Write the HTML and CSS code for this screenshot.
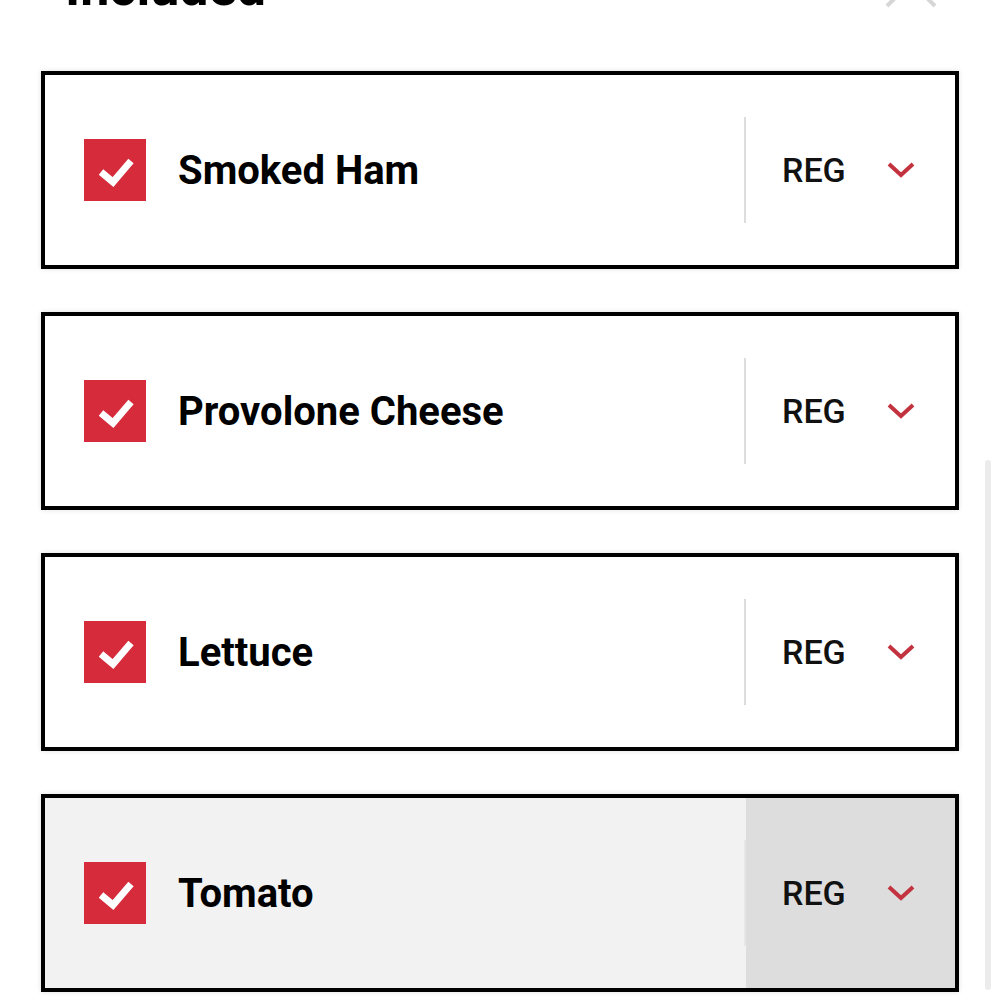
FILE: index.html
```html
<!DOCTYPE html>
<html lang="en">
<head>
    <meta charset="UTF-8">
    <meta name="viewport" content="width=device-width, initial-scale=1.0">
    <title>Included</title>
    <link rel="stylesheet" href="styles.css">
</head>
<body>
    <div class="page">
        <div class="section-head">
            <span class="section-title">Included</span>
            <svg class="collapse" width="56" height="40" viewBox="0 0 56 40">
                <polyline points="4,36 28,12 52,36" fill="none" stroke="#d6d6d6" stroke-width="4"/>
            </svg>
        </div>

        <div class="items">
            <div class="item">
                <div class="item-main">
                    <span class="check">
                        <svg width="62" height="62" viewBox="0 0 62 62"><polyline points="17,33 29,43 47,22" fill="none" stroke="#fff" stroke-width="7"/></svg>
                    </span>
                    <span class="item-name">Smoked Ham</span>
                </div>
                <div class="divider"></div>
                <div class="item-size">
                    <span class="size-label">REG</span>
                    <svg class="chevron" width="28" height="18" viewBox="0 0 28 18"><polyline points="2,3 14,14 26,3" fill="none" stroke="#c3333f" stroke-width="4"/></svg>
                </div>
            </div>

            <div class="item">
                <div class="item-main">
                    <span class="check">
                        <svg width="62" height="62" viewBox="0 0 62 62"><polyline points="17,33 29,43 47,22" fill="none" stroke="#fff" stroke-width="7"/></svg>
                    </span>
                    <span class="item-name">Provolone Cheese</span>
                </div>
                <div class="divider"></div>
                <div class="item-size">
                    <span class="size-label">REG</span>
                    <svg class="chevron" width="28" height="18" viewBox="0 0 28 18"><polyline points="2,3 14,14 26,3" fill="none" stroke="#c3333f" stroke-width="4"/></svg>
                </div>
            </div>

            <div class="item">
                <div class="item-main">
                    <span class="check">
                        <svg width="62" height="62" viewBox="0 0 62 62"><polyline points="17,33 29,43 47,22" fill="none" stroke="#fff" stroke-width="7"/></svg>
                    </span>
                    <span class="item-name">Lettuce</span>
                </div>
                <div class="divider"></div>
                <div class="item-size">
                    <span class="size-label">REG</span>
                    <svg class="chevron" width="28" height="18" viewBox="0 0 28 18"><polyline points="2,3 14,14 26,3" fill="none" stroke="#c3333f" stroke-width="4"/></svg>
                </div>
            </div>

            <div class="item pressed">
                <div class="item-main">
                    <span class="check">
                        <svg width="62" height="62" viewBox="0 0 62 62"><polyline points="17,33 29,43 47,22" fill="none" stroke="#fff" stroke-width="7"/></svg>
                    </span>
                    <span class="item-name">Tomato</span>
                </div>
                <div class="divider"></div>
                <div class="item-size">
                    <span class="size-label">REG</span>
                    <svg class="chevron" width="28" height="18" viewBox="0 0 28 18"><polyline points="2,3 14,14 26,3" fill="none" stroke="#c3333f" stroke-width="4"/></svg>
                </div>
            </div>
        </div>

        <div class="scrollbar"></div>
    </div>
</body>
</html>
```

FILE: styles.css
```css
body {
    margin: 0;
    background-color: #ffffff;
    font-family: Roboto, "Liberation Sans", sans-serif;
    overflow: hidden;
}
.page {
    display: flow-root;
    position: relative;
    height: 1000px;
    padding: 0 41px;
}
.section-head {
    display: flex;
    justify-content: space-between;
    align-items: flex-end;
    height: 52px;
    margin-top: -38px;
    padding: 0 24px;
}
.section-title {
    font-size: 52px;
    line-height: 52px;
    font-weight: bold;
    color: #000000;
}
.collapse {
    margin-bottom: 4px;
    margin-right: -4px;
}
.items {
    display: flex;
    flex-direction: column;
    gap: 43px;
    padding-top: 57px;
}
.item {
    display: flex;
    align-items: center;
    height: 198px;
    box-sizing: border-box;
    border: 4px solid #000000;
    background-color: #ffffff;
    box-shadow: 0 0 5px rgba(0, 0, 0, 0.12);
}
.item-main {
    flex: 1;
    display: flex;
    align-items: center;
    gap: 32px;
    padding-left: 39px;
}
.check {
    width: 62px;
    height: 62px;
    flex: none;
    display: flex;
    background-color: #d52b3b;
}
.item-name {
    font-size: 40px;
    font-weight: bold;
    color: #000000;
}
.divider {
    width: 2px;
    height: 106px;
    background-color: #dddddd;
}
.item-size {
    width: 209px;
    height: 100%;
    box-sizing: border-box;
    display: flex;
    align-items: center;
    gap: 41px;
    padding-left: 36px;
}
.size-label {
    font-size: 34px;
    font-weight: 500;
    color: #111111;
}
.pressed {
    background-color: #f2f2f2;
}
.pressed .divider {
    background-color: #e6e6e6;
}
.pressed .item-size {
    background-color: #dddddd;
}
.scrollbar {
    position: absolute;
    top: 460px;
    right: 9px;
    width: 6px;
    height: 530px;
    border-radius: 3px;
    background-color: #ececec;
}
```
